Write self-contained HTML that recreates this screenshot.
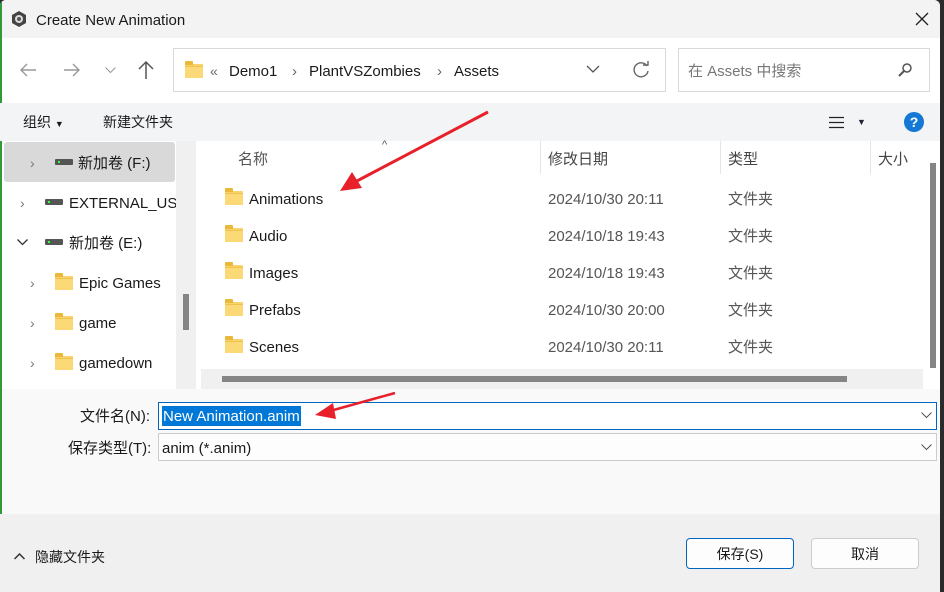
<!DOCTYPE html>
<html><head><meta charset="utf-8"><style>
*{margin:0;padding:0;box-sizing:border-box}
body{width:944px;height:592px;overflow:hidden;background:#2b2b2b;font-family:"Liberation Sans","Noto Sans CJK SC",sans-serif;font-size:15px;line-height:23px;color:#1a1a1a;position:relative}
.a{position:absolute;white-space:nowrap}
.fold{position:absolute;width:18px;height:13px;background:#f8d36a;border-radius:1px}
.fold:before{content:"";position:absolute;left:0;top:-3px;width:8px;height:4px;background:#eab93a;border-radius:1px 1px 0 0}
.fold:after{content:"";position:absolute;left:0;top:2px;width:18px;height:11px;background:#fbd977;border-top:1px solid #f0c14f}
.chev{position:absolute;color:#777;font-size:14px}
.drv{position:absolute;width:18px;height:6px;background:#555;border-radius:1px}
.drv:after{content:"";position:absolute;left:3px;top:2px;width:2px;height:2px;background:#3f3}
</style></head><body>
<div class="a" style="left:0;top:0;width:940px;height:592px;background:#fff;border-radius:6px 6px 0 0;overflow:hidden">
<div class="a" style="left:0;top:0;width:940px;height:38px;background:#f3f3f3"></div>
<div class="a" style="left:0;top:0;width:2px;height:592px;background:#2f9a3a"></div>
<svg class="a" style="left:10px;top:10px" width="18" height="18" viewBox="0 0 18 18"><polygon points="9,1 16,5 16,13 9,17 2,13 2,5" fill="#444"/><circle cx="9" cy="9" r="4" fill="#ddd"/><circle cx="9" cy="9" r="2" fill="#555"/></svg>
<div class="a" style="left:36px;top:9px;font-size:15px">Create New Animation</div>
<svg class="a" style="left:915px;top:12px" width="14" height="14"><path d="M1 1L13 13M13 1L1 13" stroke="#222" stroke-width="1.3"/></svg>
<svg class="a" style="left:19px;top:62px" width="18" height="16"><path d="M17 8H2M8 2L2 8L8 14" stroke="#999" stroke-width="1.4" fill="none"/></svg>
<svg class="a" style="left:63px;top:62px" width="18" height="16"><path d="M1 8H16M10 2L16 8L10 14" stroke="#999" stroke-width="1.4" fill="none"/></svg>
<svg class="a" style="left:105px;top:67px" width="11" height="7"><path d="M.5 .5L5.5 5.5L10.5 .5" stroke="#999" fill="none"/></svg>
<svg class="a" style="left:137px;top:60px" width="18" height="20"><path d="M9 2V19M2 9L9 2L16 9" stroke="#555" stroke-width="1.5" fill="none"/></svg>
<div class="a" style="left:173px;top:48px;width:493px;height:44px;border:1px solid #d9d9d9;background:#fff"></div>
<div class="fold" style="left:185px;top:64px"></div>
<div class="a" style="left:210px;top:60px;color:#666;font-size:14px">«</div>
<div class="a" style="left:229px;top:60px">Demo1</div>
<div class="a" style="left:292px;top:60px;color:#666">›</div>
<div class="a" style="left:309px;top:60px">PlantVSZombies</div>
<div class="a" style="left:437px;top:60px;color:#666">›</div>
<div class="a" style="left:454px;top:60px">Assets</div>
<svg class="a" style="left:586px;top:65px" width="14" height="9"><path d="M1 1L7 7L13 1" stroke="#555" stroke-width="1.3" fill="none"/></svg>
<svg class="a" style="left:632px;top:61px" width="18" height="18"><path d="M15 5A7 7 0 1 0 16 10" stroke="#666" stroke-width="1.4" fill="none"/><path d="M11 4L16 4L16 0" stroke="#666" stroke-width="1.4" fill="none"/></svg>
<div class="a" style="left:678px;top:48px;width:252px;height:44px;border:1px solid #d9d9d9;background:#fff"></div>
<div class="a" style="left:688px;top:60px;color:#777;font-size:15px">在 Assets 中搜索</div>
<svg class="a" style="left:897px;top:62px" width="16" height="16"><circle cx="10" cy="6" r="4" stroke="#555" stroke-width="1.5" fill="none"/><path d="M7 9L2 14" stroke="#555" stroke-width="2"/></svg>
<div class="a" style="left:0;top:103px;width:940px;height:38px;background:#f3f4f6"></div>
<div class="a" style="left:23px;top:111px;font-size:14px">组织 <span style="font-size:9px">▼</span></div>
<div class="a" style="left:103px;top:111px;font-size:14px">新建文件夹</div>
<svg class="a" style="left:829px;top:116px" width="15" height="13"><path d="M0 1.5H15M0 6.5H15M0 11.5H15" stroke="#222" stroke-width="1.3"/></svg>
<div class="a" style="left:857px;top:111px;font-size:9px;color:#223">▼</div>
<div class="a" style="left:904px;top:112px;width:20px;height:20px;border-radius:50%;background:#1478d4;color:#fff;font-size:14px;font-weight:bold;text-align:center;line-height:20px">?</div>
<div class="a" style="left:176px;top:141px;width:20px;height:248px;background:#f0f0f0"></div>
<div class="a" style="left:183px;top:294px;width:6px;height:36px;background:#858585"></div>
<div class="a" style="left:4px;top:142px;width:171px;height:40px;background:#d9d9d9;border-radius:3px"></div>
<div class="chev" style="left:30px;top:152px">›</div><div class="drv" style="left:55px;top:159px"></div><div class="a" style="left:78px;top:152px">新加卷 (F:)</div>
<div class="chev" style="left:20px;top:192px">›</div><div class="drv" style="left:45px;top:199px"></div><div class="a" style="left:69px;top:192px;width:107px;overflow:hidden">EXTERNAL_USB</div>
<svg class="a" style="left:17px;top:239px" width="11" height="7"><path d="M.5 .5L5.5 5.5L10.5 .5" stroke="#333" stroke-width="1.3" fill="none"/></svg><div class="drv" style="left:45px;top:239px"></div><div class="a" style="left:69px;top:232px">新加卷 (E:)</div>
<div class="chev" style="left:30px;top:272px">›</div><div class="fold" style="left:55px;top:276px"></div><div class="a" style="left:79px;top:272px">Epic Games</div>
<div class="chev" style="left:30px;top:312px">›</div><div class="fold" style="left:55px;top:316px"></div><div class="a" style="left:79px;top:312px">game</div>
<div class="chev" style="left:30px;top:352px">›</div><div class="fold" style="left:55px;top:356px"></div><div class="a" style="left:79px;top:352px">gamedown</div>
<div class="a" style="left:382px;top:138px;font-size:11px;color:#555;line-height:14px">^</div>
<div class="a" style="left:540px;top:141px;width:1px;height:33px;background:#e5e5e5"></div>
<div class="a" style="left:720px;top:141px;width:1px;height:33px;background:#e5e5e5"></div>
<div class="a" style="left:870px;top:141px;width:1px;height:33px;background:#e5e5e5"></div>
<div class="a" style="left:238px;top:148px;color:#555">名称</div>
<div class="a" style="left:548px;top:148px;color:#444">修改日期</div>
<div class="a" style="left:728px;top:148px;color:#444">类型</div>
<div class="a" style="left:878px;top:148px;color:#444">大小</div>
<div class="a" style="left:923px;top:141px;width:17px;height:247px;background:#fff"></div>
<div class="a" style="left:930px;top:163px;width:6px;height:205px;background:#858585"></div>
<div class="fold" style="left:225px;top:191px"></div><div class="a" style="left:249px;top:188px">Animations</div><div class="a" style="left:548px;top:188px;color:#555">2024/10/30 20:11</div><div class="a" style="left:728px;top:188px;color:#555">文件夹</div>
<div class="fold" style="left:225px;top:228px"></div><div class="a" style="left:249px;top:225px">Audio</div><div class="a" style="left:548px;top:225px;color:#555">2024/10/18 19:43</div><div class="a" style="left:728px;top:225px;color:#555">文件夹</div>
<div class="fold" style="left:225px;top:265px"></div><div class="a" style="left:249px;top:262px">Images</div><div class="a" style="left:548px;top:262px;color:#555">2024/10/18 19:43</div><div class="a" style="left:728px;top:262px;color:#555">文件夹</div>
<div class="fold" style="left:225px;top:302px"></div><div class="a" style="left:249px;top:299px">Prefabs</div><div class="a" style="left:548px;top:299px;color:#555">2024/10/30 20:00</div><div class="a" style="left:728px;top:299px;color:#555">文件夹</div>
<div class="fold" style="left:225px;top:339px"></div><div class="a" style="left:249px;top:336px">Scenes</div><div class="a" style="left:548px;top:336px;color:#555">2024/10/30 20:11</div><div class="a" style="left:728px;top:336px;color:#555">文件夹</div>
<div class="a" style="left:201px;top:369px;width:722px;height:20px;background:#f0f0f0"></div>
<div class="a" style="left:222px;top:376px;width:625px;height:6px;background:#858585"></div>
<div class="a" style="left:0;top:389px;width:940px;height:125px;background:#f9f9f9"></div>
<div class="a" style="left:0;top:389px;width:2px;height:125px;background:#2f9a3a"></div>
<div class="a" style="left:80px;top:405px">文件名(N):</div>
<div class="a" style="left:158px;top:402px;width:779px;height:28px;border:1px solid #0067c0;background:#fff"></div>
<div class="a" style="left:162px;top:406px;height:20px;background:#0078d7;color:#fff;padding:0 1px;line-height:21px">New Animation.anim</div>
<div class="a" style="left:68px;top:437px">保存类型(T):</div>
<div class="a" style="left:158px;top:433px;width:779px;height:28px;border:1px solid #ccc;background:#fdfdfd"></div>
<div class="a" style="left:162px;top:437px">anim (*.anim)</div>
<svg class="a" style="left:921px;top:412px" width="11" height="7"><path d="M0.5 .5L5.5 5.5L10.5 .5" stroke="#555" fill="none"/></svg>
<svg class="a" style="left:921px;top:444px" width="11" height="7"><path d="M0.5 .5L5.5 5.5L10.5 .5" stroke="#555" fill="none"/></svg>
<div class="a" style="left:0;top:514px;width:940px;height:78px;background:#f0f0f0"></div>
<svg class="a" style="left:14px;top:553px" width="11" height="7"><path d="M0.5 6L5.5 1L10.5 6" stroke="#333" stroke-width="1.5" fill="none"/></svg>
<div class="a" style="left:35px;top:546px;font-size:14px">隐藏文件夹</div>
<div class="a" style="left:686px;top:538px;width:108px;height:31px;border:1px solid #0067c0;border-radius:4px;background:#fdfdfd;text-align:center;line-height:31px;font-size:14px">保存(S)</div>
<div class="a" style="left:811px;top:538px;width:108px;height:31px;border:1px solid #ccc;border-radius:4px;background:#fdfdfd;text-align:center;line-height:31px;font-size:14px">取消</div>
</div>
<svg class="a" style="left:0;top:0" width="944" height="592">
<line x1="488" y1="112" x2="355" y2="182" stroke="#e8202a" stroke-width="3"/>
<polygon points="340,191 352,172 362,188" fill="#e8202a"/>
<line x1="395" y1="393" x2="330" y2="411" stroke="#e8202a" stroke-width="2.5"/>
<polygon points="315,415 333,403 336,419" fill="#e8202a"/>
</svg>
</body></html>
